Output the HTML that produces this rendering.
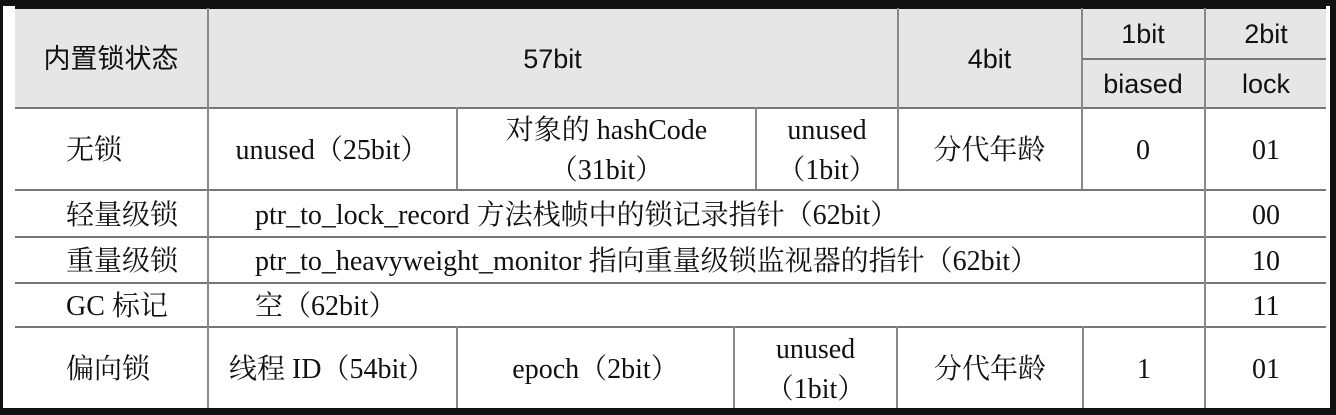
<!DOCTYPE html><html><head><meta charset="utf-8"><style>
body{margin:0;width:1336px;height:415px;background:#111;position:relative;overflow:hidden}
.w{position:absolute;left:3px;top:6px;width:1327px;height:402px;background:#fff}
.g{position:absolute;left:15px;top:8px;width:1311px;height:99px;background:#e6e6e6}
.h{position:absolute;height:2px;background:#777}
.v{position:absolute;width:2px;background:#888}
.t{position:absolute;display:flex;align-items:center;justify-content:center;text-align:center;font-family:"Liberation Serif","Noto Serif CJK SC",serif;font-size:28px;color:#111;line-height:40px;white-space:nowrap;padding-top:5px;box-sizing:border-box}
.s{font-family:"Liberation Sans","Noto Sans CJK SC",sans-serif;font-size:27px;padding-top:2px}
.l{justify-content:flex-start}
</style></head><body>
<div class="w"></div><div class="g"></div>
<div class="h" style="left:15px;top:6px;width:1311px;height:3px;background:#111"></div>
<div class="h" style="left:15px;top:107px;width:1311px"></div>
<div class="h" style="left:1082px;top:58px;width:244px"></div>
<div class="h" style="left:15px;top:189px;width:1311px"></div>
<div class="h" style="left:15px;top:236px;width:1311px"></div>
<div class="h" style="left:15px;top:282px;width:1311px"></div>
<div class="h" style="left:15px;top:326px;width:1311px"></div>
<div class="v" style="left:207px;top:8px;height:400px"></div>
<div class="v" style="left:897px;top:8px;height:181px"></div>
<div class="v" style="left:1081px;top:8px;height:181px"></div>
<div class="v" style="left:1204px;top:8px;height:400px"></div>
<div class="v" style="left:456px;top:107px;height:82px"></div>
<div class="v" style="left:755px;top:107px;height:82px"></div>
<div class="v" style="left:456px;top:326px;height:82px"></div>
<div class="v" style="left:733px;top:326px;height:82px"></div>
<div class="v" style="left:896px;top:326px;height:82px"></div>
<div class="v" style="left:1082px;top:326px;height:82px"></div>

<div class="t s" style="left:15px;top:8px;width:192px;height:99px">内置锁状态</div>
<div class="t s" style="left:208px;top:8px;width:689px;height:99px">57bit</div>
<div class="t s" style="left:898px;top:8px;width:183px;height:99px">4bit</div>
<div class="t s" style="left:1082px;top:8px;width:122px;height:50px">1bit</div>
<div class="t s" style="left:1206px;top:8px;width:120px;height:50px">2bit</div>
<div class="t s" style="left:1082px;top:59px;width:122px;height:48px">biased</div>
<div class="t s" style="left:1206px;top:59px;width:120px;height:48px">lock</div>

<div class="t l" style="left:66px;top:108px;width:140px;height:81px">无锁</div>
<div class="t" style="left:208px;top:108px;width:248px;height:81px">unused（25bit）</div>
<div class="t" style="left:458px;top:108px;width:297px;height:81px">对象的 hashCode<br>（31bit）</div>
<div class="t" style="left:757px;top:108px;width:140px;height:81px">unused<br>（1bit）</div>
<div class="t" style="left:898px;top:108px;width:183px;height:81px">分代年龄</div>
<div class="t" style="left:1082px;top:108px;width:122px;height:81px">0</div>
<div class="t" style="left:1206px;top:108px;width:120px;height:81px">01</div>

<div class="t l" style="left:66px;top:190px;width:140px;height:46px">轻量级锁</div>
<div class="t l" style="left:255px;top:190px;width:940px;height:46px">ptr_to_lock_record 方法栈帧中的锁记录指针（62bit）</div>
<div class="t" style="left:1206px;top:190px;width:120px;height:46px">00</div>
<div class="t l" style="left:66px;top:237px;width:140px;height:45px">重量级锁</div>
<div class="t l" style="left:255px;top:237px;width:940px;height:45px">ptr_to_heavyweight_monitor 指向重量级锁监视器的指针（62bit）</div>
<div class="t" style="left:1206px;top:237px;width:120px;height:45px">10</div>
<div class="t l" style="left:66px;top:283px;width:140px;height:43px">GC 标记</div>
<div class="t l" style="left:255px;top:283px;width:940px;height:43px">空（62bit）</div>
<div class="t" style="left:1206px;top:283px;width:120px;height:43px">11</div>

<div class="t l" style="left:66px;top:327px;width:140px;height:81px">偏向锁</div>
<div class="t" style="left:208px;top:327px;width:248px;height:81px">线程 ID（54bit）</div>
<div class="t" style="left:458px;top:327px;width:275px;height:81px">epoch（2bit）</div>
<div class="t" style="left:735px;top:327px;width:161px;height:81px">unused<br>（1bit）</div>
<div class="t" style="left:898px;top:327px;width:184px;height:81px">分代年龄</div>
<div class="t" style="left:1084px;top:327px;width:120px;height:81px">1</div>
<div class="t" style="left:1206px;top:327px;width:120px;height:81px">01</div>
</body></html>
